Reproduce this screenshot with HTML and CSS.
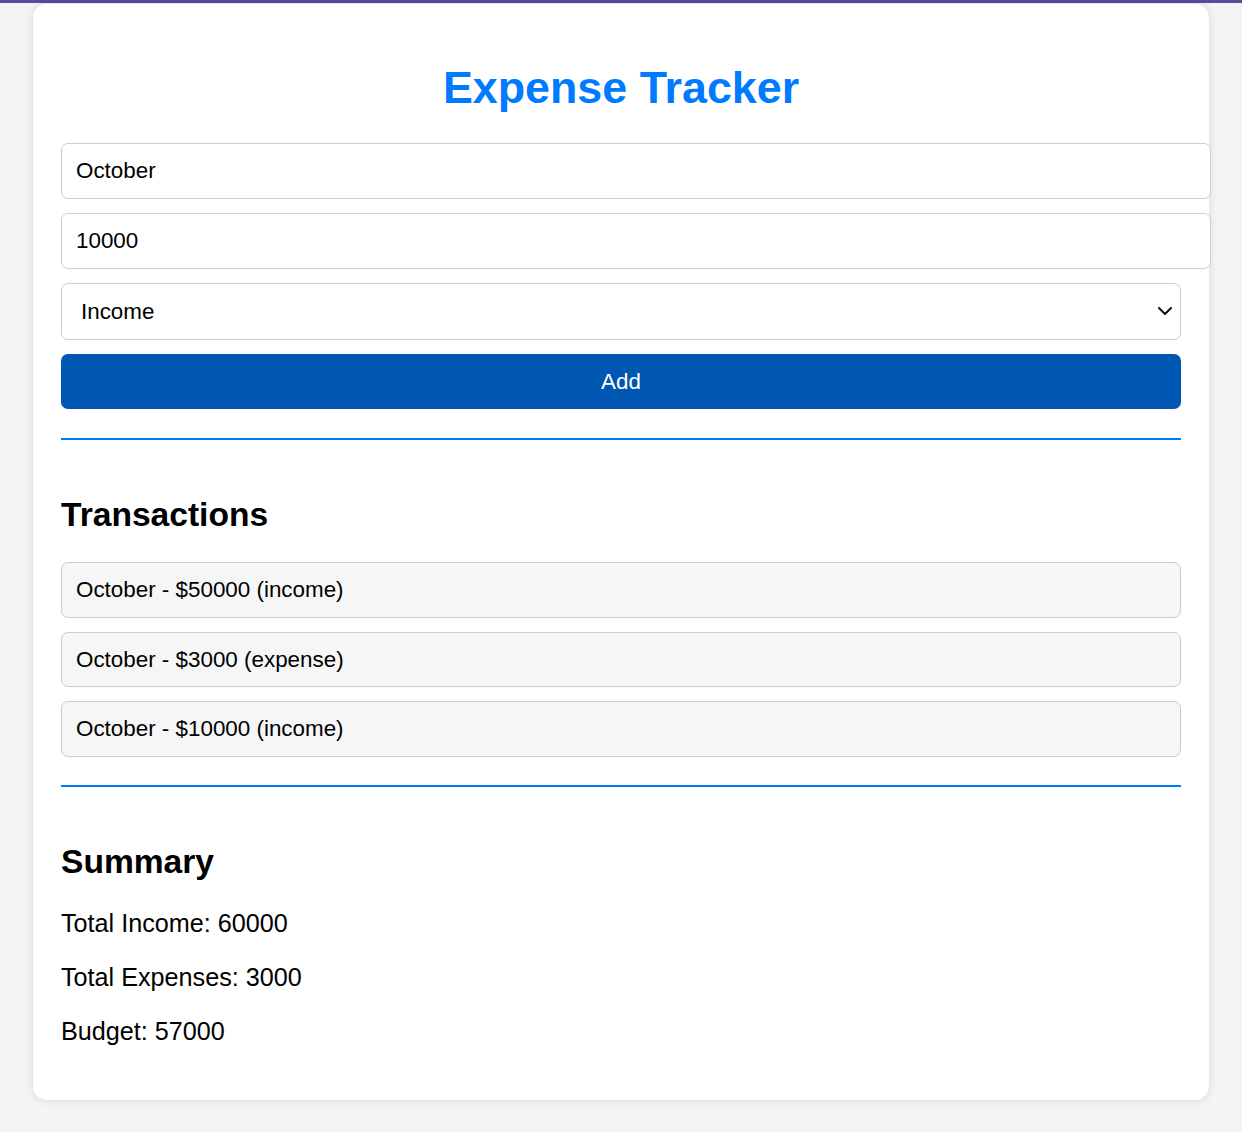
FILE: index.html
```html
<!DOCTYPE html>
<html lang="en">
<head>
<meta charset="utf-8">
<title>Expense Tracker</title>
<link rel="stylesheet" href="styles.css">
</head>
<body>
<div class="topbar"></div>
<main class="card">
  <h1 class="title">Expense Tracker</h1>
  <form class="entry-form">
    <input class="field" type="text" value="October">
    <input class="field" type="text" value="10000">
    <div class="select-wrap">
      <select class="select">
        <option>Income</option>
        <option>Expense</option>
      </select>
      <svg class="chevron" width="14" height="8" viewBox="0 0 14 8" aria-hidden="true"><path d="M1 1l6 6 6-6" fill="none" stroke="#111" stroke-width="2" stroke-linecap="round" stroke-linejoin="round"/></svg>
    </div>
    <button class="add-btn" type="button">Add</button>
  </form>
  <hr class="divider">
  <section class="block">
    <h2 class="section-title">Transactions</h2>
    <ul class="tx-list">
      <li class="tx-item">October - $50000 (income)</li>
      <li class="tx-item">October - $3000 (expense)</li>
      <li class="tx-item">October - $10000 (income)</li>
    </ul>
  </section>
  <hr class="divider">
  <section class="block">
    <h2 class="section-title">Summary</h2>
    <p class="summary-line">Total Income: 60000</p>
    <p class="summary-line">Total Expenses: 3000</p>
    <p class="summary-line">Budget: 57000</p>
  </section>
</main>
</body>
</html>
```

FILE: styles.css
```css
* {
  font-family: "Liberation Sans", Arial, sans-serif;
}

body {
  margin: 0;
  background: #f4f4f4;
  color: #000;
  min-height: 1132px;
}

.topbar {
  height: 3px;
  background: #5b4a9f;
}

.card {
  box-sizing: border-box;
  width: 1176px;
  margin: 1px auto 0;
  padding: 28px;
  background: #fff;
  border-radius: 14px;
  box-shadow: 0 0 10px rgba(0, 0, 0, 0.12);
}

.title {
  margin: 30px 0 31px;
  font-size: 44.8px;
  line-height: 50px;
  font-weight: bold;
  color: #007bff;
  text-align: center;
}

.entry-form {
  display: flex;
  flex-direction: column;
  gap: 14px;
  margin: 0;
  padding-bottom: 1px;
}

.field {
  box-sizing: content-box;
  width: 100%;
  height: 26px;
  padding: 14px;
  margin: 0;
  border: 1px solid #ccc;
  border-radius: 7px;
  font-size: 22.4px;
  color: #000;
  background: #fff;
  outline: none;
}

.select-wrap {
  position: relative;
}

.select {
  box-sizing: border-box;
  display: block;
  width: 100%;
  height: 57px;
  padding: 0 19px;
  border: 1px solid #ccc;
  border-radius: 7px;
  font-size: 22.4px;
  color: #000;
  background: #fff;
  appearance: none;
  -webkit-appearance: none;
}

.chevron {
  position: absolute;
  right: 9px;
  top: 24px;
  pointer-events: none;
}

.add-btn {
  height: 55px;
  border: none;
  border-radius: 7px;
  background: #0056b3;
  color: #fff;
  font-size: 22.4px;
  cursor: pointer;
}

.divider {
  margin: 28px 0;
  border: none;
  height: 2px;
  background: #007bff;
}

.block {
  display: flow-root;
}

.section-title {
  margin: 28px 0;
  font-size: 33.6px;
  line-height: 38px;
  font-weight: bold;
}

.tx-list {
  list-style: none;
  margin: 0;
  padding: 0;
  display: flex;
  flex-direction: column;
  gap: 14px;
}

.tx-item {
  box-sizing: border-box;
  height: 55.7px;
  padding: 0 14px;
  display: flex;
  align-items: center;
  background: #f6f6f6;
  border: 1px solid #ccc;
  border-radius: 7px;
  font-size: 22.4px;
}

.summary-line {
  margin: 25.2px 0;
  font-size: 25.2px;
  line-height: 29px;
}
```
